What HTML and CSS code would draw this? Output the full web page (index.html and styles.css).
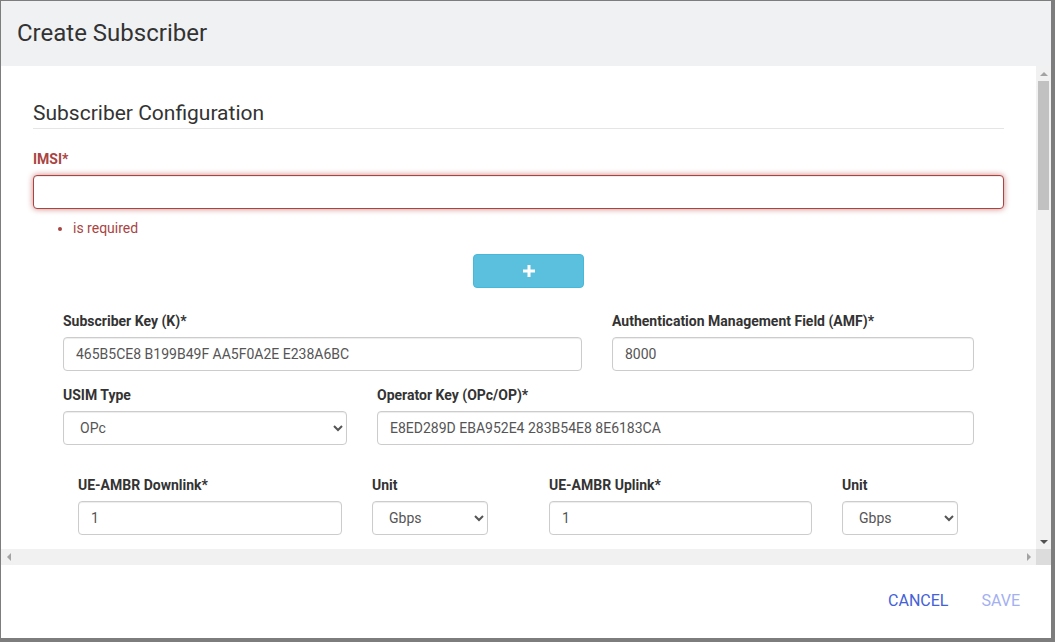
FILE: index.html
```html
<!DOCTYPE html>
<html lang="en">
<head>
  <meta charset="UTF-8">
  <meta name="viewport" content="width=device-width, initial-scale=1.0">
  <title>Create Subscriber</title>
  <link rel="stylesheet" href="styles.css">
</head>
<body>
  <div class="modal">
    <div class="modal-header">
      <h2>Create Subscriber</h2>
    </div>

    <div class="modal-body">
      <div class="scroll-content">
        <form class="form">
          <fieldset>
            <legend>Subscriber Configuration</legend>

            <div class="form-group has-error">
              <label class="control-label">IMSI*</label>
              <input type="text" class="form-control" value="">
              <ul class="error-detail">
                <li>is required</li>
              </ul>
            </div>

            <div class="add-row">
              <button type="button" class="btn-add">
                <svg width="12" height="12" viewBox="0 0 12 12"><path d="M4.5 0h3v4.5H12v3H7.5V12h-3V7.5H0v-3h4.5z" fill="#fff"/></svg>
              </button>
            </div>

            <div class="security row-key">
              <div class="form-group">
                <label class="control-label">Subscriber Key (K)*</label>
                <input type="text" class="form-control" value="465B5CE8 B199B49F AA5F0A2E E238A6BC">
              </div>
              <div class="form-group">
                <label class="control-label">Authentication Management Field (AMF)*</label>
                <input type="text" class="form-control" value="8000">
              </div>
            </div>

            <div class="security row-op">
              <div class="form-group">
                <label class="control-label">USIM Type</label>
                <select class="form-control">
                  <option selected>OPc</option>
                  <option>OP</option>
                </select>
              </div>
              <div class="form-group">
                <label class="control-label">Operator Key (OPc/OP)*</label>
                <input type="text" class="form-control" value="E8ED289D EBA952E4 283B54E8 8E6183CA">
              </div>
            </div>

            <div class="ambr">
              <div class="form-group ambr-value">
                <label class="control-label">UE-AMBR Downlink*</label>
                <input type="text" class="form-control" value="1">
              </div>
              <div class="form-group ambr-unit">
                <label class="control-label">Unit</label>
                <select class="form-control">
                  <option>bps</option>
                  <option>Kbps</option>
                  <option>Mbps</option>
                  <option selected>Gbps</option>
                  <option>Tbps</option>
                </select>
              </div>
              <div class="form-group ambr-value ambr-up">
                <label class="control-label">UE-AMBR Uplink*</label>
                <input type="text" class="form-control" value="1">
              </div>
              <div class="form-group ambr-unit">
                <label class="control-label">Unit</label>
                <select class="form-control">
                  <option>bps</option>
                  <option>Kbps</option>
                  <option>Mbps</option>
                  <option selected>Gbps</option>
                  <option>Tbps</option>
                </select>
              </div>
            </div>
          </fieldset>
        </form>
      </div>

      <!-- scrollbars drawn by hand, the screenshot browser hides real ones -->
      <div class="vscroll">
        <div class="sb-btn"><span class="tri tri-up off"></span></div>
        <div class="sb-track v"><div class="sb-thumb"></div></div>
        <div class="sb-btn"><span class="tri tri-down"></span></div>
      </div>
      <div class="hscroll">
        <div class="sb-btn"><span class="tri tri-left off"></span></div>
        <div class="sb-track h"></div>
        <div class="sb-btn"><span class="tri tri-right off"></span></div>
      </div>
      <div class="sb-corner"></div>
    </div>

    <div class="modal-footer">
      <button type="button" class="btn-text">CANCEL</button>
      <button type="button" class="btn-text disabled">SAVE</button>
    </div>
  </div>
</body>
</html>
```

FILE: styles.css
```css
html, body {
  height: 100%;
}
body {
  margin: 0;
  background: #7d7d7d;
  font-family: Roboto, "Liberation Sans", sans-serif;
  font-size: 14px;
  line-height: 1.42857;
  color: #333;
  overflow: hidden;
}
.modal {
  margin: 1px 4px 0 1px;
  height: 637px;
  background: #fff;
  display: flex;
  flex-direction: column;
}
.modal-header {
  height: 65px;
  flex: none;
  background: #f0f1f3;
  display: flex;
  align-items: center;
  padding: 0 16px;
}
.modal-header h2 {
  margin: 0;
  font-size: 24px;
  font-weight: 400;
  color: #333;
}
.modal-body {
  height: 499px;
  flex: none;
  display: grid;
  grid-template-columns: 1fr 15px;
  grid-template-rows: 1fr 16px;
}
.scroll-content {
  overflow: hidden;
  padding: 32px 32px 0 32px;
}
.modal-footer {
  flex: 1;
  display: flex;
  justify-content: flex-end;
  align-items: center;
  padding: 0 15px 3px 0;
  gap: 1px;
}

/* fake scrollbars */
.vscroll {
  display: flex;
  flex-direction: column;
  background: #f1f1f1;
}
.hscroll {
  display: flex;
  background: #f1f1f1;
}
.sb-corner {
  background: #dcdcdc;
}
.sb-btn {
  width: 15px;
  height: 15px;
  flex: none;
  display: flex;
  align-items: center;
  justify-content: center;
}
.hscroll .sb-btn {
  height: 16px;
}
.sb-track {
  flex: 1;
}
.sb-track.v {
  padding: 0 2px;
}
.sb-thumb {
  height: 129px;
  background: #c1c1c1;
}
.tri {
  width: 0;
  height: 0;
  border-style: solid;
  border-color: transparent;
}
.tri-up {
  border-width: 0 4px 4px 4px;
  border-bottom-color: #505050;
}
.tri-down {
  border-width: 4px 4px 0 4px;
  border-top-color: #505050;
}
.tri-left {
  border-width: 4px 4px 4px 0;
  border-right-color: #505050;
}
.tri-right {
  border-width: 4px 0 4px 4px;
  border-left-color: #505050;
}
.tri-up.off { border-bottom-color: #a3a3a3; }
.tri-left.off { border-right-color: #a3a3a3; }
.tri-right.off { border-left-color: #a3a3a3; }

fieldset {
  border: 0;
  margin: 0;
  padding: 0;
  min-width: 0;
}
legend {
  display: block;
  width: 100%;
  padding: 0;
  margin-bottom: 21px;
  font-size: 21px;
  line-height: 30px;
  color: #333;
  border-bottom: 1px solid #e5e5e5;
}
.form-group {
  margin-bottom: 15px;
}
.control-label {
  display: inline-block;
  max-width: 100%;
  margin-bottom: 5px;
  font-weight: 700;
}
.form-control {
  display: block;
  width: 100%;
  height: 34px;
  box-sizing: border-box;
  padding: 6px 12px;
  font-family: inherit;
  font-size: 14px;
  line-height: 1.42857;
  color: #555;
  background: #fff;
  border: 1px solid #ccc;
  border-radius: 4px;
  box-shadow: inset 0 1px 1px rgba(0, 0, 0, 0.075);
}
.has-error .control-label {
  color: #a94442;
}
.has-error .form-control {
  border-color: #a94442;
  box-shadow: inset 0 1px 1px rgba(0, 0, 0, 0.075), 0 0 6px #ce8483;
}
.error-detail {
  margin: 10px 0 0;
  padding-left: 40px;
  color: #a94442;
}
.add-row {
  padding-left: 440px;
  margin-bottom: 24px;
}
.btn-add {
  width: 111px;
  height: 34px;
  background: #5bc0de;
  border: 1px solid #46b8da;
  border-radius: 4px;
  display: flex;
  align-items: center;
  justify-content: center;
  padding: 0;
  cursor: pointer;
}
.security {
  display: grid;
  column-gap: 30px;
  padding: 0 30px;
}
.row-key {
  grid-template-columns: 519px 362px;
}
.row-op {
  grid-template-columns: 284px 597px;
}
.ambr {
  display: flex;
  gap: 30px;
  padding: 16px 0 0 45px;
}
.ambr-value {
  width: 264px;
}
.ambr-up {
  width: 263px;
  margin-left: 31px;
}
.ambr-unit {
  width: 116px;
}
.btn-text {
  background: none;
  border: 0;
  font-family: Roboto, "Liberation Sans", sans-serif;
  font-size: 16px;
  padding: 8px 16px;
  color: #4461d9;
  cursor: pointer;
}
.btn-text.disabled {
  color: #a3b0f2;
  cursor: default;
}
```
